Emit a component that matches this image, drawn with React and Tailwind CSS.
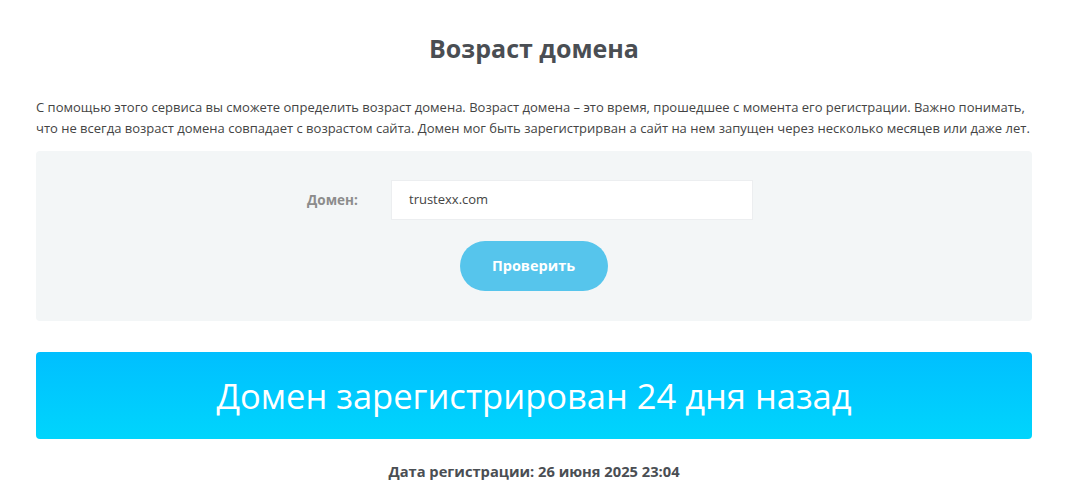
export default function App() {
  return (
    <div className="w-[1066px] min-h-[498px] bg-white pl-9 pr-[34px] text-[#444]" style={{ fontFamily: '"Open Sans", "DejaVu Sans", sans-serif' }}>
      <h1 className="pt-[33px] text-center text-[25px] leading-[30px] font-bold text-[#4a4e53]">Возраст домена</h1>
      <p className="mt-[34px] text-[13px] leading-[21px] text-[#444]">
        С помощью этого сервиса вы сможете определить возраст домена. Возраст домена – это время, прошедшее с момента его регистрации. Важно понимать, что не всегда возраст домена совпадает с возрастом сайта. Домен мог быть зарегистрирван а сайт на нем запущен через несколько месяцев или даже лет.
      </p>
      <div className="mt-[12px] h-[170px] rounded bg-[#f3f6f7] pt-[29px] flex flex-col items-center">
        <div className="flex items-center mr-[8px]">
          <span className="w-[84px] pr-[34px] text-right text-[13.5px] font-bold text-[#8c8c8c]">Домен:</span>
          <div className="w-[362px] h-[40px] bg-white border border-[#eceef0] flex items-center pl-[17px] text-[13px] text-[#444]">trustexx.com</div>
        </div>
        <button className="mt-[21px] ml-[-1px] w-[148px] h-[50px] rounded-full bg-[#56c5ec] text-white text-[14.5px] font-bold">Проверить</button>
      </div>
      <div className="mt-[31px] h-[87px] rounded bg-gradient-to-b from-[#00bfff] to-[#00d5fc] flex items-center justify-center text-white text-[34.5px] font-normal">
        Домен зарегистрирован 24 дня назад
      </div>
      <div className="mt-[21px] text-center text-[14.7px] font-bold text-[#4a4e53]">Дата регистрации: 26 июня 2025 23:04</div>
    </div>
  );
}
